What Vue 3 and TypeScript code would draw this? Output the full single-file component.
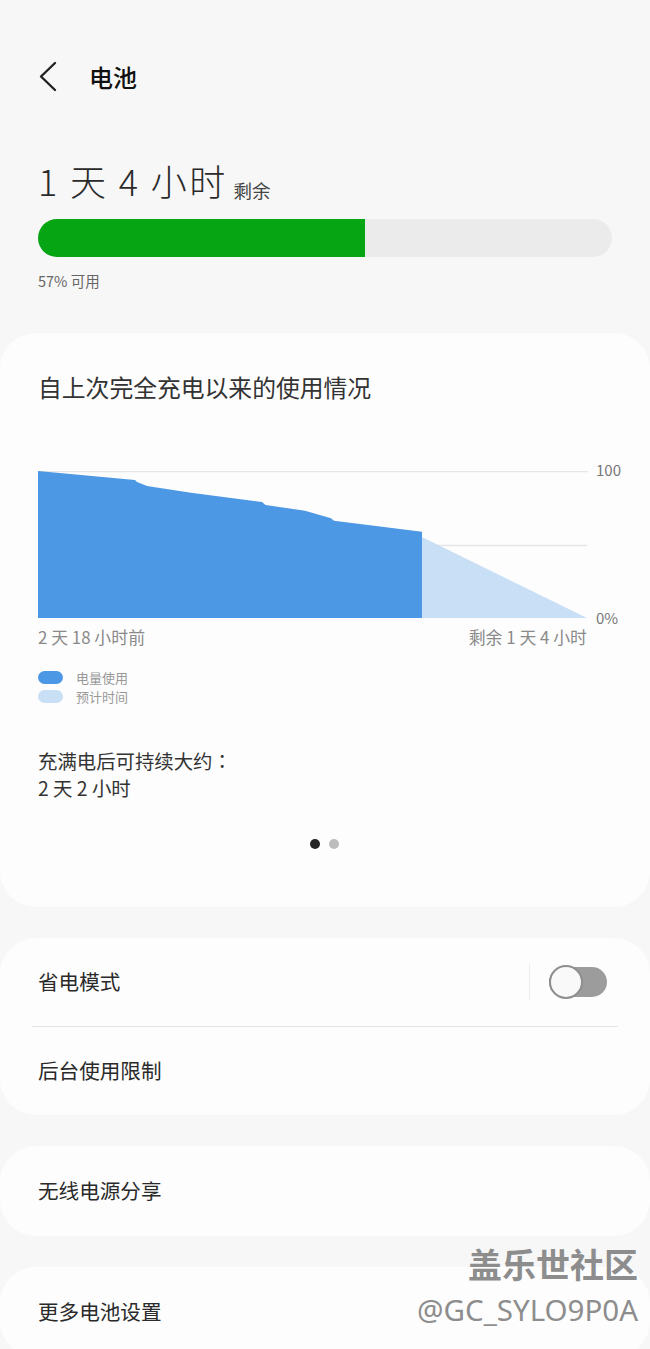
<script setup lang="ts">
type Legend = { label: string; color: string };

const legend: Legend[] = [
  { label: '电量使用', color: '#4c98e4' },
  { label: '预计时间', color: '#c8dff5' },
];

const usedPoints =
  '0,0 97,9 99,11 109,15 153,21.7 224,31 227.5,34 267,39.7 293,47.3 296,49.7 384,60.7 384,147 0,147';
const forecastPoints = '384,66 549,147 384,147';
</script>

<template>
  <div class="page">
    <header class="top-bar">
      <svg class="back" width="20" height="32" viewBox="0 0 20 32">
        <path d="M17 3 L3 16.5 L17 30" fill="none" stroke="#222" stroke-width="2.4" stroke-linecap="round" stroke-linejoin="round" />
      </svg>
      <span class="top-title">电池</span>
    </header>

    <section class="summary">
      <div class="remain"><span class="remain-big">1 天 4 小时</span><span class="remain-small">剩余</span></div>
      <div class="battery-bar"><div class="battery-fill" :style="{ width: '57%' }"></div></div>
      <div class="battery-text">57% 可用</div>
    </section>

    <section class="card usage">
      <h2 class="usage-title">自上次完全充电以来的使用情况</h2>
      <div class="chart">
        <div class="chart-plot">
          <svg width="584" height="148" viewBox="0 0 584 148">
            <line x1="0" y1="0.5" x2="550" y2="0.5" stroke="#e6e6e6" stroke-width="1.5" />
            <line x1="384" y1="74.5" x2="549" y2="74.5" stroke="#e6e6e6" stroke-width="1.5" />
            <polygon :points="forecastPoints" fill="#c8dff5" />
            <polygon :points="usedPoints" fill="#4c98e4" />
          </svg>
          <span class="axis axis-top">100</span>
          <span class="axis axis-bottom">0%</span>
        </div>
        <div class="chart-labels">
          <span>2 天 18 小时前</span>
          <span>剩余 1 天 4 小时</span>
        </div>
      </div>
      <ul class="legend">
        <li v-for="item in legend" :key="item.label">
          <i class="swatch" :style="{ background: item.color }"></i>{{ item.label }}
        </li>
      </ul>
      <p class="estimate">充满电后可持续大约：<br />2 天 2 小时</p>
      <div class="dots"><i class="dot on"></i><i class="dot"></i></div>
    </section>

    <section class="card group">
      <div class="row row-switch">
        <span>省电模式</span>
        <div class="switch-wrap">
          <div class="switch"><div class="knob"></div></div>
        </div>
      </div>
      <div class="divider"></div>
      <div class="row row-second"><span>后台使用限制</span></div>
    </section>

    <section class="card single"><span>无线电源分享</span></section>
    <section class="card single last"><span>更多电池设置</span></section>

    <div class="watermark">
      <div class="wm-brand">盖乐世社区</div>
      <div class="wm-id">@GC_SYLO9P0A</div>
    </div>
  </div>
</template>

<style>
html,
body {
  margin: 0;
  background: #f7f7f7;
}
</style>

<style scoped>
.page {
  position: relative;
  width: 650px;
  height: 1349px;
  overflow: hidden;
  background: #f7f7f7;
  color: #222;
  font-family: "Noto Sans CJK SC", "Noto Sans", sans-serif;
}

.top-bar {
  display: flex;
  align-items: center;
  height: 36px;
  padding: 58px 0 0 38px;
}

.back {
  flex: none;
}

.top-title {
  margin-left: 31px;
  font-size: 24px;
  font-weight: 500;
  color: #111;
}

.summary {
  padding: 0 38px;
  margin-top: 62px;
}

.remain {
  display: flex;
  align-items: flex-end;
  height: 48px;
}

.remain-big {
  font-size: 36px;
  font-weight: 300;
  line-height: 48px;
  letter-spacing: 2.4px;
  color: #2a2a2a;
}

.remain-small {
  margin-left: 6px;
  font-size: 18.5px;
  line-height: 28px;
  color: #444;
}

.battery-bar {
  height: 38px;
  margin-top: 15px;
  border-radius: 19px;
  background: #ebebeb;
  overflow: hidden;
}

.battery-fill {
  height: 100%;
  background: #05a513;
}

.battery-text {
  margin-top: 14px;
  font-size: 14.5px;
  line-height: 20px;
  color: #666;
}

.card {
  background: #fdfdfd;
  border-radius: 36px;
}

.usage {
  height: 574px;
  margin-top: 42px;
  padding: 38px 0 0 38px;
  box-sizing: border-box;
}

.usage-title {
  margin: 0;
  font-size: 23.8px;
  font-weight: 400;
  line-height: 32px;
  color: #333;
}

.chart {
  margin-top: 68px;
}

.chart-plot {
  position: relative;
  height: 148px;
}

.chart-plot svg {
  display: block;
}

.axis {
  position: absolute;
  left: 558px;
  font-size: 15px;
  line-height: 18px;
  color: #777;
}

.axis-top {
  top: -10px;
}

.axis-bottom {
  top: 138px;
}

.chart-labels {
  display: flex;
  justify-content: space-between;
  width: 549px;
  margin-top: 7px;
  font-size: 16.9px;
  line-height: 22px;
  color: #8a8a8a;
}

.legend {
  list-style: none;
  margin: 20px 0 0;
  padding: 0;
  font-size: 13px;
  color: #999;
}

.legend li {
  display: flex;
  align-items: center;
  height: 19px;
}

.swatch {
  width: 25px;
  height: 13px;
  margin-right: 13px;
  border-radius: 7px;
}

.estimate {
  margin: 41px 0 0;
  font-family: "Noto Sans CJK TC", "Noto Sans", sans-serif;
  font-size: 19.4px;
  line-height: 27px;
  color: #333;
}

.dots {
  display: flex;
  justify-content: center;
  gap: 9px;
  margin: 38px 0 0 -40px;
}

.dot {
  width: 10px;
  height: 10px;
  border-radius: 50%;
  background: #bdbdbd;
}

.dot.on {
  background: #252525;
}

.group {
  margin-top: 31px;
  height: 177px;
}

.row {
  display: flex;
  align-items: center;
  justify-content: space-between;
  padding: 0 43px 0 38px;
  font-size: 20.6px;
  color: #2a2a2a;
}

.row > span,
.single > span {
  display: block;
  padding-bottom: 2px;
}

.row-switch {
  height: 88px;
}

.row-second {
  height: 88px;
}

.switch-wrap {
  display: flex;
  align-items: center;
  height: 36px;
  padding-left: 19px;
  border-left: 1px solid #eeeeee;
}

.switch {
  position: relative;
  width: 58px;
  height: 30px;
  border-radius: 15px;
  background: #9c9c9c;
}

.knob {
  position: absolute;
  top: -2px;
  left: 0;
  width: 34px;
  height: 34px;
  box-sizing: border-box;
  border: 2px solid #8e8e8e;
  border-radius: 50%;
  background: #f9f9f9;
}

.divider {
  height: 1px;
  margin: 0 32px;
  background: #e6e6e6;
}

.single {
  display: flex;
  align-items: center;
  height: 90px;
  margin-top: 31px;
  padding-left: 38px;
  font-size: 20.6px;
  color: #2a2a2a;
}

.watermark {
  position: absolute;
  right: 12px;
  top: 1244px;
  text-align: right;
  color: #8d8d8d;
}

.wm-brand {
  font-size: 34px;
  font-weight: 700;
  line-height: 40px;
}

.wm-id {
  margin-top: 8px;
  font-family: "Noto Sans", sans-serif;
  font-size: 29.5px;
  line-height: 36px;
}
</style>
